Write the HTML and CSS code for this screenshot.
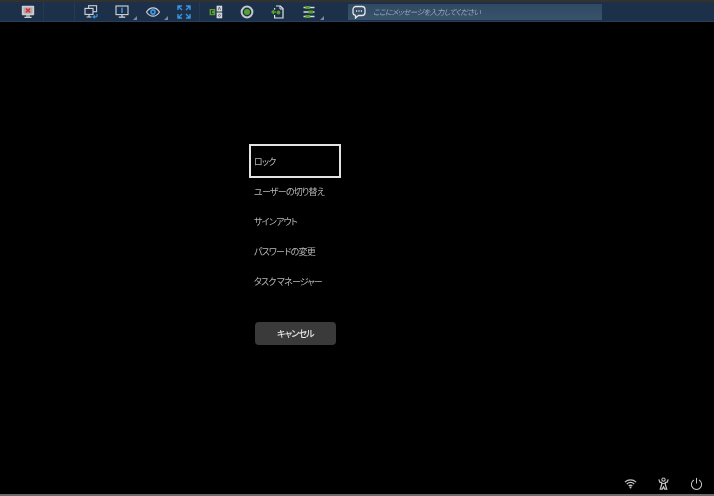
FILE: index.html
```html
<!DOCTYPE html>
<html lang="ja">
<head>
<meta charset="utf-8">
<title>Remote session</title>
<link rel="stylesheet" href="styles.css">
</head>
<body>
<div class="screen">
  <div class="topline"></div>
  <header class="toolbar">
    <div class="tool first">
      <svg viewBox="0 0 14 14" class="ico"><rect x=".8" y=".8" width="12.400" height="9.400" rx=".8" fill="#c9ced2"/><rect x="2.600" y="2.400" width="8.800" height="6.200" fill="#b9a4a8"/><path d="M5 3.600l4 3.800M9 3.600l-4 3.800" stroke="#d8333b" stroke-width="1.500"/><path d="M6 10v1.800M8 10v1.800M3.400 12.400h7.200" stroke="#c9ced2" stroke-width="1.300"/></svg>
    </div>
    <div class="group">
      <div class="tool">
        <svg viewBox="0 0 14 14" class="ico"><rect x="4.600" y=".7" width="8" height="6" fill="none" stroke="#c9ced2" stroke-width="1.100"/><rect x="1" y="3.400" width="8" height="6" fill="#1c3049" stroke="#d4d8db" stroke-width="1.100"/><path d="M5 9.600v2M2.600 12h4.800" stroke="#d4d8db" stroke-width="1.100"/><path d="M13 9v1.800a1 1 0 0 1-1 1H9.400M10.800 10.400l-1.600 1.400 1.600 1.400" fill="none" stroke="#3c93dc" stroke-width="1.200"/></svg>
      </div>
      <div class="tool menu">
        <svg viewBox="0 0 14 14" class="ico"><rect x="1" y="1" width="12" height="8.600" fill="none" stroke="#d4d8db" stroke-width="1.100"/><rect x="6.200" y="2.600" width="1.600" height="5.400" fill="#3c93dc"/><path d="M7 9.800v2M3.800 12.200h6.400" stroke="#d4d8db" stroke-width="1.200"/></svg>
      </div>
      <div class="tool menu">
        <svg viewBox="0 0 14 14" class="ico"><path d="M.5 7C2.400 4 4.600 2.800 7 2.800S11.600 4 13.500 7C11.600 10 9.400 11.200 7 11.200S2.400 10 .5 7z" fill="none" stroke="#ccd1d5" stroke-width="1.200"/><circle cx="7" cy="7" r="2.900" fill="#3c93dc"/><circle cx="7" cy="7" r="1.100" fill="#1c3049"/></svg>
      </div>
      <div class="tool">
        <svg viewBox="0 0 14 14" class="ico"><path d="M1 5V1h4M1 1l4 4M9 1h4v4M13 1L9 5M1 9v4h4M1 13l4-4M13 9v4H9M13 13L9 9" fill="none" stroke="#3c93dc" stroke-width="1.400"/></svg>
      </div>
    </div>
    <div class="group last">
      <div class="tool">
        <svg viewBox="0 0 14 14" class="ico"><rect x=".6" y="4" width="5.600" height="6.200" fill="#5aa02c"/><path d="M4.500 5.500H2.500v3.200h2" fill="none" stroke="#1c3049" stroke-width=".9"/><rect x="7.600" y=".7" width="5.600" height="5.800" fill="#d4d8db"/><rect x="7.600" y="7.500" width="5.600" height="5.800" fill="#d4d8db"/><path d="M9.200 5l1.200-3 1.200 3M9.500 10.400a1 1 0 1 0 2 0a1 1 0 1 0-2 0" fill="none" stroke="#4a5562" stroke-width=".8"/></svg>
      </div>
      <div class="tool">
        <svg viewBox="0 0 14 14" class="ico"><circle cx="7" cy="7" r="5.400" fill="#1c3049" stroke="#c2c9cc" stroke-width="2"/><circle cx="7" cy="7" r="3" fill="#5aa02c"/></svg>
      </div>
      <div class="tool">
        <svg viewBox="0 0 14 14" class="ico"><path d="M5 1h4.500L12 3.500V13H3.600V10M3.600 4.500V3" fill="none" stroke="#dfe2e4" stroke-width="1.200"/><path d="M9 1v3h3" fill="none" stroke="#dfe2e4" stroke-width="1"/><path d="M1 7h4M3 5l-2 2 2 2" fill="none" stroke="#5aa02c" stroke-width="1.300"/><circle cx="7.500" cy="7.500" r="1.900" fill="#5aa02c"/></svg>
      </div>
      <div class="tool menu">
        <svg viewBox="0 0 14 14" class="ico"><path d="M1.500 2.500h11M1.500 7h11M1.500 11.500h11" stroke="#d4d8db" stroke-width="1.400"/><rect x="3.400" y="1" width="4.600" height="3" fill="#5aa02c"/><rect x="6.400" y="5.500" width="4.600" height="3" fill="#5aa02c"/><rect x="3.400" y="10" width="4.600" height="3" fill="#5aa02c"/></svg>
      </div>
    </div>
    <div class="message">
      <svg viewBox="0 0 14 14" class="msg-ico"><path d="M4 1.500h6a3 3 0 0 1 3 3v3a3 3 0 0 1-3 3H6.500L3.500 13v-2.600A3 3 0 0 1 1 7.500v-3a3 3 0 0 1 3-3z" fill="none" stroke="#e6e8ea" stroke-width="1.300"/><path d="M4 6h1.200M6.400 6h1.200M8.800 6H10" stroke="#e6e8ea" stroke-width="1.300"/></svg>
      <div class="message-field">ここにメッセージを入力してください</div>
    </div>
  </header>
  <main class="security">
    <nav class="options">
      <div class="option focused">ロック</div>
      <div class="option">ユーザーの切り替え</div>
      <div class="option">サインアウト</div>
      <div class="option">パスワードの変更</div>
      <div class="option">タスク マネージャー</div>
    </nav>
    <div class="cancel">キャンセル</div>
  </main>
  <footer class="tray">
    <svg viewBox="0 0 14 14" class="tray-ico"><path d="M1 5.500C4.500 2.300 9.500 2.300 13 5.500M3 7.600C5.400 5.500 8.600 5.500 11 7.600M5 9.700C6.200 8.700 7.800 8.700 9 9.700" fill="none" stroke="#c4c4c4" stroke-width="1.400"/><circle cx="7" cy="11.400" r="1.100" fill="#c4c4c4"/></svg>
    <svg viewBox="0 0 14 14" class="tray-ico"><circle cx="7" cy="2.800" r="1.800" fill="none" stroke="#c4c4c4" stroke-width="1.100"/><path d="M2 2.500l1 3 2 .4v2.500L3.500 13h2.200L7 10.500 8.300 13h2.200L9 8.400V5.900l2-.4 1-3" fill="none" stroke="#c4c4c4" stroke-width="1.300"/><path d="M5.200 7h3.600" stroke="#c4c4c4" stroke-width="1"/></svg>
    <svg viewBox="0 0 14 14" class="tray-ico"><path d="M4.200 3.200a5.500 5.500 0 1 0 5.600 0" fill="none" stroke="#c4c4c4" stroke-width="1.100"/><path d="M7 1v6" stroke="#c4c4c4" stroke-width="1.100"/></svg>
  </footer>
  <div class="bottomline"></div>
</div>
</body>
</html>
```

FILE: styles.css
```css
* { box-sizing: border-box; }
html, body { margin: 0; height: 100%; background: #000; overflow: hidden; }
.screen {
  width: 714px;
  height: 496px;
  display: flex;
  flex-direction: column;
  background: #000;
  font-family: "Noto Sans CJK JP", "Noto Sans", sans-serif;
  font-feature-settings: "palt";
  color: #c4c4c4;
  filter: blur(0.35px);
}
.topline { height: 2px; background: #33322f; flex: none; }
.toolbar {
  height: 20px;
  flex: none;
  display: flex;
  align-items: center;
  background: #1c3049;
  border-bottom: 1px solid #26405c;
}
.tool {
  width: 31px;
  height: 19px;
  display: flex;
  align-items: center;
  justify-content: center;
  position: relative;
  flex: none;
}
.first {
  margin-left: 12px;
  width: 32px;
  border-right: 1px solid #25394f;
  margin-right: 30px;
}
.group {
  display: flex;
  height: 19px;
  border-left: 1px solid #25394f;
  flex: none;
}
.ico { width: 14px; height: 14px; display: block; }
.menu::after {
  content: "";
  position: absolute;
  right: 0;
  bottom: 1px;
  width: 0;
  height: 0;
  border-style: solid;
  border-width: 0 0 4px 4px;
  border-color: transparent transparent #7d8a99 transparent;
}
.message {
  margin-left: 24px;
  width: 254px;
  height: 16px;
  display: flex;
  align-items: center;
  background: linear-gradient(#304963, #3a536c);
  flex: none;
}
.msg-ico { width: 14px; height: 14px; margin-left: 4px; flex: none; }
.message-field {
  margin-left: 7px;
  font-size: 7.500px;
  font-style: italic;
  letter-spacing: -0.5px;
  color: #9aa8b6;
  white-space: nowrap;
}
.security {
  flex: 1;
  display: flex;
  flex-direction: column;
  align-items: flex-start;
  padding: 122px 0 0 249px;
}
.options { display: flex; flex-direction: column; }
.option {
  width: 92px;
  height: 30px;
  display: flex;
  align-items: center;
  padding-left: 5px;
  font-size: 9px;
  letter-spacing: -0.8px;
  color: #b8b8b8;
  white-space: nowrap;
}
.focused {
  height: 34px;
  margin-bottom: -2px;
  border: 2px solid #e4e4e4;
  padding-left: 3px;
}
.cancel {
  margin: 26px 0 0 6px;
  width: 81px;
  height: 23px;
  border-radius: 4px;
  background: #3a3a3a;
  display: flex;
  align-items: center;
  justify-content: center;
  font-size: 9px;
  font-weight: 500;
  letter-spacing: -0.8px;
  color: #e4e4e4;
}
.tray {
  height: 28px;
  flex: none;
  display: flex;
  justify-content: flex-end;
  align-items: center;
  gap: 20px;
  padding: 6px 11px 0 0;
}
.tray-ico { width: 13px; height: 13px; display: block; }
.bottomline { height: 2px; flex: none; background: #6a6a6a; }
```
